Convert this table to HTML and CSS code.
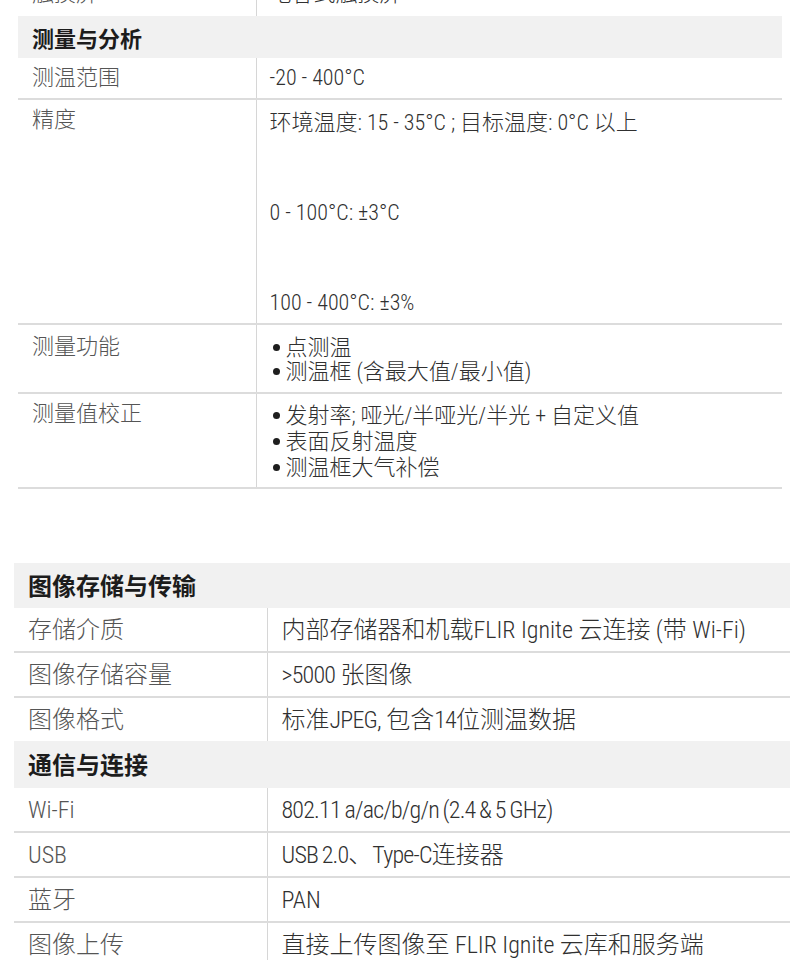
FILE: index.html
```html
<!DOCTYPE html>
<html lang="zh-CN">
<head>
<meta charset="utf-8">
<title>规格</title>
<link rel="stylesheet" href="styles.css">
</head>
<body>
<table class="spec spec-a">
  <colgroup><col class="col-a-label"><col></colgroup>
  <tr class="row-cut">
    <td class="label">触摸屏</td>
    <td class="value">电容式触摸屏</td>
  </tr>
  <tr class="head head-a"><td colspan="2">测量与分析</td></tr>
  <tr class="row">
    <td class="label">测温范围</td>
    <td class="value">-20 - 400°C</td>
  </tr>
  <tr class="row row-acc">
    <td class="label">精度</td>
    <td class="value">
      <p class="para">环境温度: 15 - 35°C ; 目标温度: 0°C 以上</p>
      <p class="para">0 - 100°C: ±3°C</p>
      <p class="para">100 - 400°C: ±3%</p>
    </td>
  </tr>
  <tr class="row row-list2">
    <td class="label">测量功能</td>
    <td class="value">
      <ul class="bullets bullets-2">
        <li>点测温</li>
        <li>测温框 (含最大值/最小值)</li>
      </ul>
    </td>
  </tr>
  <tr class="row row-list3">
    <td class="label">测量值校正</td>
    <td class="value">
      <ul class="bullets bullets-3">
        <li>发射率; 哑光/半哑光/半光 + 自定义值</li>
        <li>表面反射温度</li>
        <li>测温框大气补偿</li>
      </ul>
    </td>
  </tr>
</table>

<table class="spec spec-b">
  <colgroup><col class="col-b-label"><col></colgroup>
  <tr class="head head-b"><td colspan="2">图像存储与传输</td></tr>
  <tr class="row">
    <td class="label">存储介质</td>
    <td class="value">内部存储器和机载FLIR Ignite 云连接 (带 Wi-Fi)</td>
  </tr>
  <tr class="row">
    <td class="label">图像存储容量</td>
    <td class="value"><span class="tight">&gt;5000</span> 张图像</td>
  </tr>
  <tr class="row row-last">
    <td class="label">图像格式</td>
    <td class="value">标准<span class="tight">JPEG,</span> 包含<span class="tight">14</span>位测温数据</td>
  </tr>
  <tr class="head head-b head-b2"><td colspan="2">通信与连接</td></tr>
  <tr class="row">
    <td class="label">Wi-Fi</td>
    <td class="value"><span class="tight">802.11 a/ac/b/g/n (2.4 &amp; 5 GHz)</span></td>
  </tr>
  <tr class="row">
    <td class="label">USB</td>
    <td class="value"><span class="tight">USB 2.0</span>、<span class="tight">Type-C</span>连接器</td>
  </tr>
  <tr class="row">
    <td class="label">蓝牙</td>
    <td class="value">PAN</td>
  </tr>
  <tr class="row">
    <td class="label">图像上传</td>
    <td class="value">直接上传图像至 FLIR Ignite 云库和服务端</td>
  </tr>
</table>
</body>
</html>
```

FILE: styles.css
```css
html, body {
  margin: 0;
  padding: 0;
  background: #ffffff;
  overflow: hidden;
}

body {
  font-family: "Roboto", "Noto Sans CJK SC", sans-serif;
  font-stretch: 75%;
  font-weight: 300;
  color: #333333;
}

.spec {
  border-collapse: collapse;
  table-layout: fixed;
}

.spec td {
  padding: 0;
  vertical-align: top;
}

/* ---------- first table ---------- */
.spec-a {
  margin: -26px 0 0 18px;
  width: 764px;
  font-size: 22px;
}

.col-a-label { width: 238px; }

.spec-a .label,
.spec-a .value {
  padding: 5px 14px;
  line-height: 30px;
}

.spec-a .value { padding-left: 13px; }

/* ---------- second table ---------- */
.spec-b {
  margin: 74px 0 0 14px;
  width: 800px;
  font-size: 24px;
}

.col-b-label { width: 253px; }

.spec-b .label,
.spec-b .value {
  padding: 7px 14px 6px;
  line-height: 30px;
}

.spec-b .value { padding-left: 14px; }

.tight {
  letter-spacing: -0.8px;
  word-spacing: -1px;
}

/* ---------- shared ---------- */
.label {
  color: #555555;
  border-right: 1px solid #d6d6d6;
}

.value {
  color: #303030;
}

.row td {
  border-bottom: 2px solid #dcdcdc;
}

.row-last td { border-bottom: none; }

.row-cut td { height: 32px; }

.head td {
  background: #f1f1f1;
  color: #1c1c1c;
  font-family: "Noto Sans CJK SC", sans-serif;
  font-weight: 700;
}

.head-a td {
  font-size: 22px;
  line-height: 30px;
  padding: 6px 14px 6px;
}

.head-b td {
  font-size: 24px;
  line-height: 30px;
  padding: 7px 14px 8px;
}

.head-b2 td {
  padding: 8px 14px 9px;
}

.spec-a .row-acc .value {
  padding-top: 8px;
}

.para {
  margin: 0 0 60px;
}

.para:last-child { margin-bottom: 0; }

.bullets {
  list-style: none;
  margin: 0;
  padding: 0 0 0 3px;
}

.bullets li::before {
  content: "";
  display: inline-block;
  width: 7px;
  height: 7px;
  border-radius: 50%;
  background: #1e1e1e;
  margin-right: 6px;
  vertical-align: 4px;
}

.spec-a .row-list2 .label {
  padding-top: 7px;
  padding-bottom: 7px;
}

.spec-a .row-list2 .value {
  padding-top: 11px;
  padding-bottom: 8px;
}

.bullets-2 li { line-height: 24px; }

.spec-a .row-list3 .value {
  padding-top: 9px;
  padding-bottom: 6px;
}

.bullets-3 li { line-height: 26px; }
```
